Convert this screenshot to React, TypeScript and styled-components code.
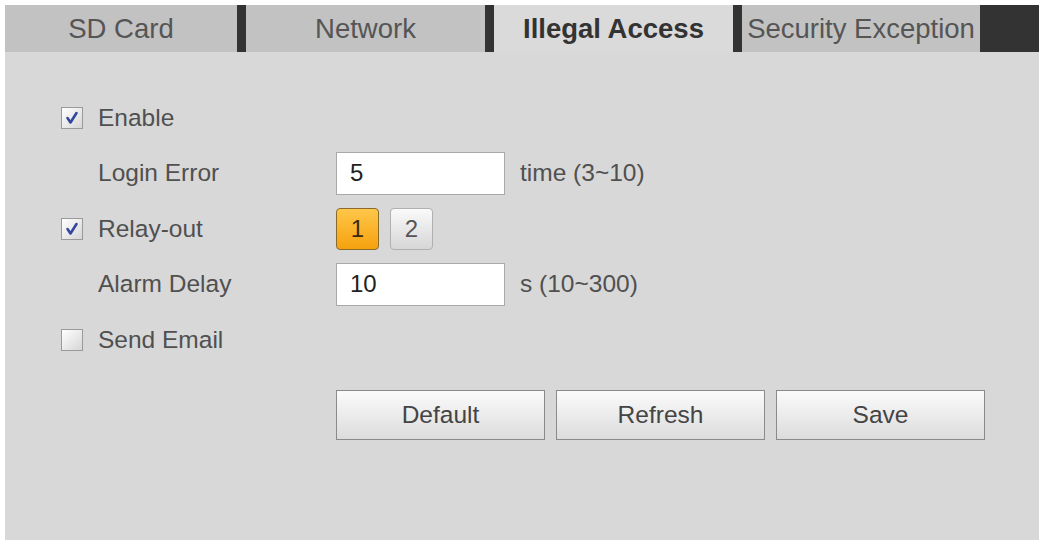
import React from 'react';
import styled, { createGlobalStyle } from 'styled-components';

const GlobalStyle = createGlobalStyle`
  html, body {
    margin: 0;
    padding: 0;
    background: #ffffff;
    font-family: "Liberation Sans", Arial, sans-serif;
  }
`;

const Page = styled.div`
  width: 1042px;
  height: 545px;
  box-sizing: border-box;
  padding: 5px 3px 5px 5px;
  display: flex;
  flex-direction: column;
`;

const TabBar = styled.div`
  display: flex;
  height: 47px;
  flex: 0 0 47px;
`;

const Tab = styled.div<{ $width: number; $active?: boolean }>`
  flex: 0 0 ${p => p.$width}px;
  display: flex;
  align-items: center;
  justify-content: center;
  background: ${p => (p.$active ? '#dadada' : '#c2c2c2')};
  color: ${p => (p.$active ? '#333333' : '#555555')};
  font-size: 27.5px;
  font-weight: ${p => (p.$active ? 'bold' : 'normal')};
  white-space: nowrap;
  overflow: hidden;
`;

const Divider = styled.div`
  flex: 0 0 9px;
  background: #333333;
`;

const TabFill = styled.div`
  flex: 1;
  background: #333333;
`;

const Panel = styled.div`
  flex: 1;
  background: #d8d8d8;
  padding: 38px 0 0 56px;
  box-sizing: border-box;
`;

const Form = styled.div`
  display: grid;
  grid-template-columns: 275px 1fr;
  grid-auto-rows: 55.5px;
  align-items: center;
`;

const FieldLabel = styled.label<{ $indent?: boolean }>`
  display: flex;
  align-items: center;
  gap: 15px;
  padding-left: ${p => (p.$indent ? '37px' : '0')};
  font-size: 24.5px;
  color: #505050;
`;

const Box = styled.span`
  width: 22px;
  height: 22px;
  box-sizing: border-box;
  border: 1px solid #9a9a9a;
  background: linear-gradient(135deg, #ffffff 0%, #d6d6d6 100%);
  display: flex;
  align-items: center;
  justify-content: center;
`;

const Field = styled.div`
  display: flex;
  align-items: center;
  gap: 15px;
`;

const TextInput = styled.div`
  width: 169px;
  height: 43px;
  box-sizing: border-box;
  border: 1px solid #a9a9a9;
  background: #ffffff;
  font-size: 24px;
  color: #222222;
  display: flex;
  align-items: center;
  padding-left: 13px;
`;

const Unit = styled.span`
  font-size: 24.5px;
  color: #505050;
`;

const RelayGroup = styled.div`
  display: flex;
  gap: 11px;
`;

const RelayButton = styled.div<{ $on?: boolean }>`
  width: 43px;
  height: 42px;
  box-sizing: border-box;
  border-radius: 4px;
  border: 1px solid ${p => (p.$on ? '#8a6a2a' : '#b0b0b0')};
  background: ${p =>
    p.$on
      ? 'linear-gradient(#ffc64a, #f5a20e)'
      : 'linear-gradient(#fafafa, #d6d6d6)'};
  display: flex;
  align-items: center;
  justify-content: center;
  font-size: 24px;
  color: ${p => (p.$on ? '#3a2a10' : '#555555')};
`;

const ButtonRow = styled.div`
  display: flex;
  gap: 11px;
  margin: 22px 0 0 275px;
`;

const ActionButton = styled.div`
  width: 209px;
  height: 50px;
  box-sizing: border-box;
  border: 1px solid #8a8a8a;
  background: linear-gradient(#fbfbfb, #dcdcdc);
  display: flex;
  align-items: center;
  justify-content: center;
  font-size: 24.5px;
  color: #444444;
`;

const Check = ({ checked }: { checked?: boolean }) => (
  <Box>
    {checked && (
      <svg width="16" height="16" viewBox="0 0 16 16">
        <path d="M3.5 8 L6.5 12.5 L12.5 3" fill="none" stroke="#34479e" strokeWidth="2.6" strokeLinecap="round" strokeLinejoin="round" />
      </svg>
    )}
  </Box>
);

const App = () => {
  return (
    <Page>
      <GlobalStyle />
      <TabBar>
        <Tab $width={232}>SD Card</Tab>
        <Divider />
        <Tab $width={239}>Network</Tab>
        <Divider />
        <Tab $width={239} $active>Illegal Access</Tab>
        <Divider />
        <Tab $width={238}>Security Exception</Tab>
        <TabFill />
      </TabBar>
      <Panel>
        <Form>
          <FieldLabel><Check checked />Enable</FieldLabel>
          <div />
          <FieldLabel $indent>Login Error</FieldLabel>
          <Field>
            <TextInput>5</TextInput>
            <Unit>time (3~10)</Unit>
          </Field>
          <FieldLabel><Check checked />Relay-out</FieldLabel>
          <RelayGroup>
            <RelayButton $on>1</RelayButton>
            <RelayButton>2</RelayButton>
          </RelayGroup>
          <FieldLabel $indent>Alarm Delay</FieldLabel>
          <Field>
            <TextInput>10</TextInput>
            <Unit>s (10~300)</Unit>
          </Field>
          <FieldLabel><Check />Send Email</FieldLabel>
          <div />
        </Form>
        <ButtonRow>
          <ActionButton>Default</ActionButton>
          <ActionButton>Refresh</ActionButton>
          <ActionButton>Save</ActionButton>
        </ButtonRow>
      </Panel>
    </Page>
  );
};

export default App;
